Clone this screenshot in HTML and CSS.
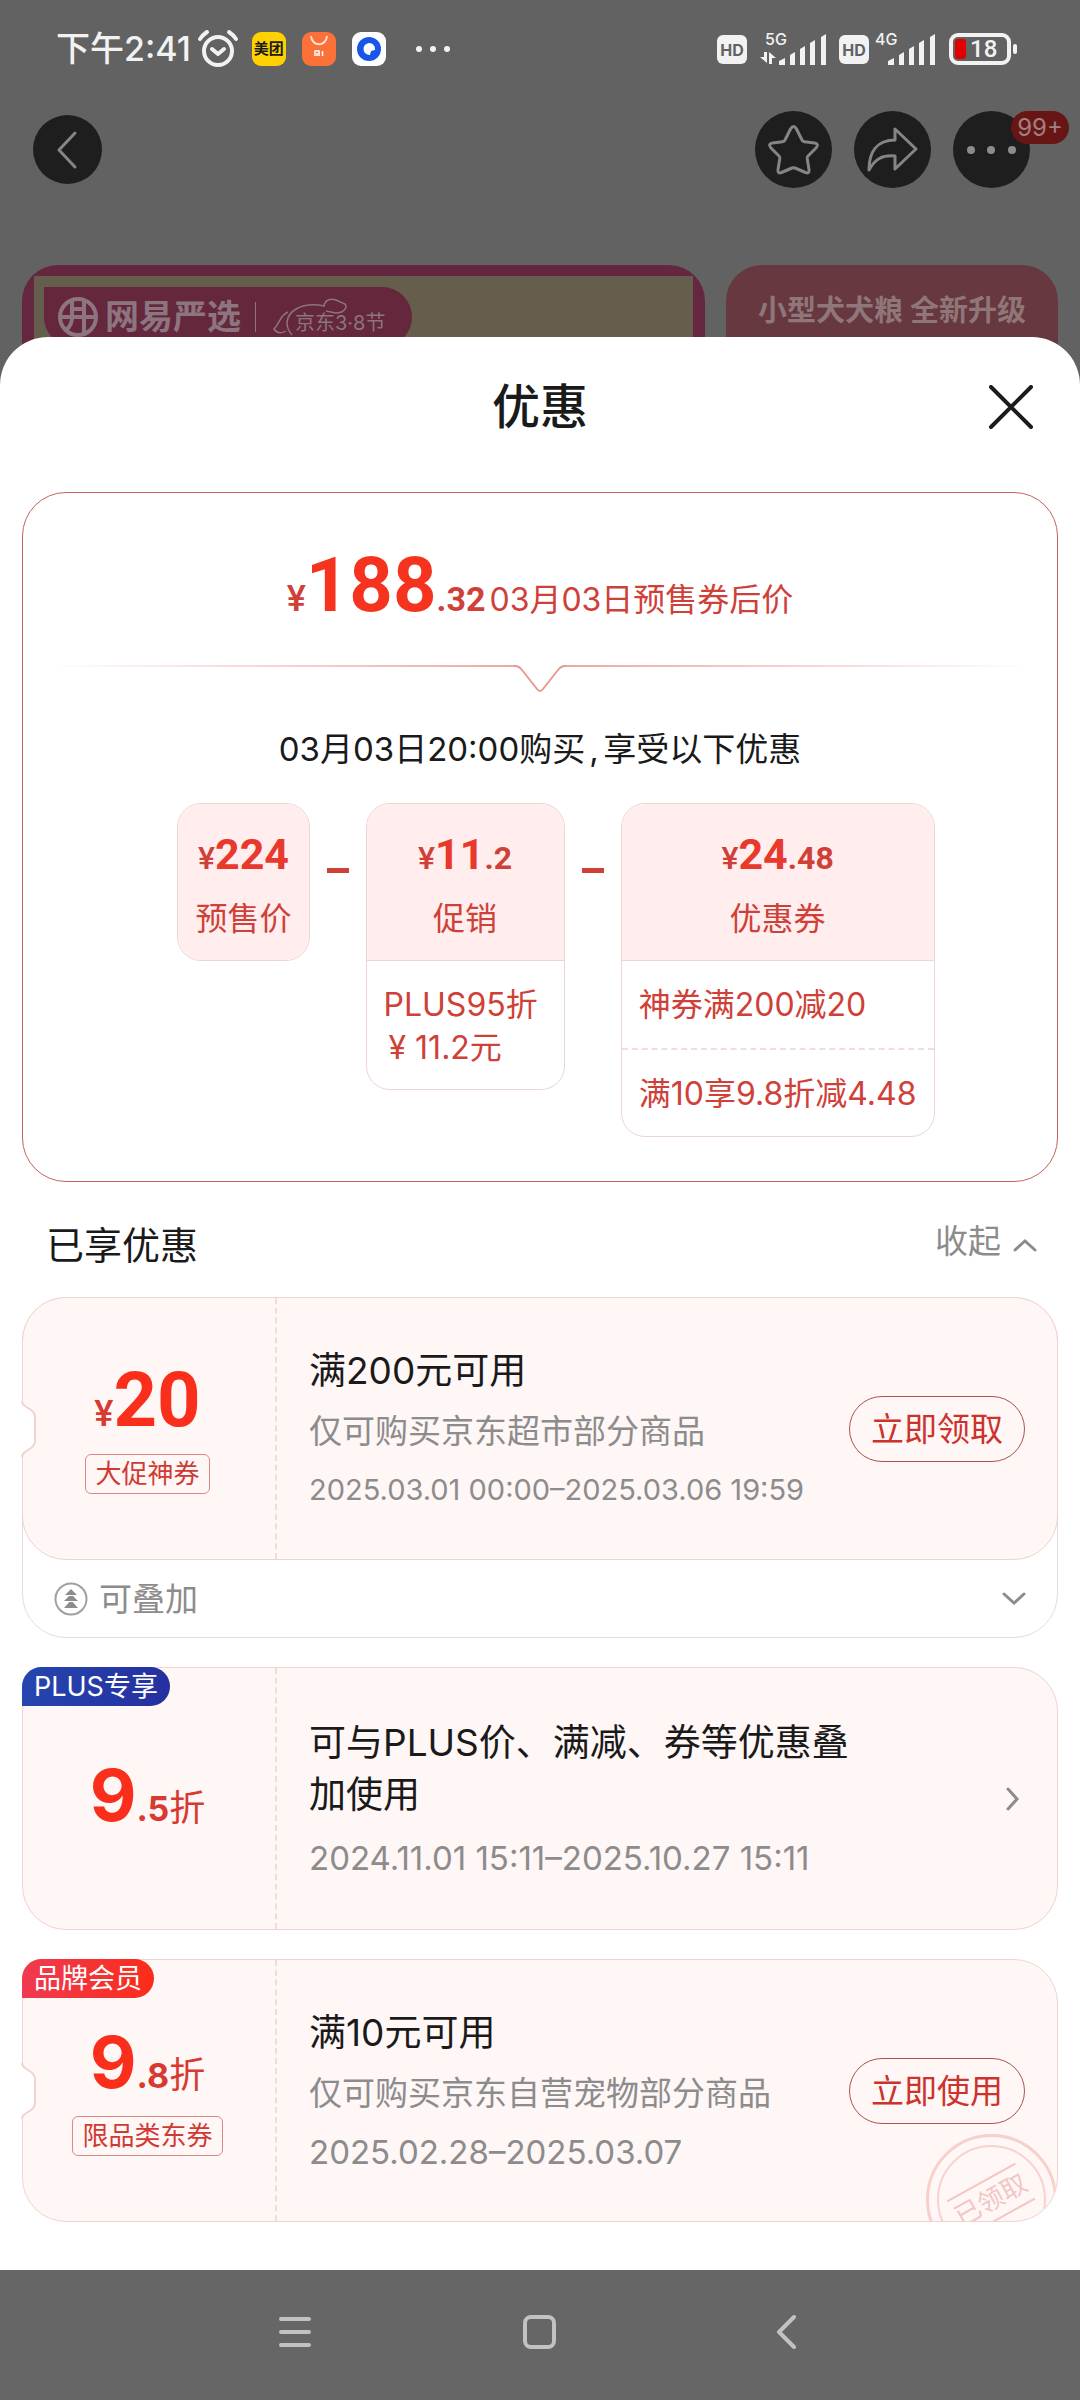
FILE: index.html
```html
<!DOCTYPE html>
<html lang="zh-CN">
<head>
<meta charset="utf-8">
<meta name="viewport" content="width=device-width, initial-scale=1">
<title>优惠</title>
<link rel="stylesheet" href="styles.css">
</head>
<body>
<div class="status">
  <div class="status-side">
    <span class="clock">下午2:41</span>
    <svg class="alarm" width="42" height="40" viewBox="0 0 42 40" fill="none" stroke="#f2f2f2" stroke-linecap="round" stroke-linejoin="round"><circle cx="21" cy="22" r="14" stroke-width="4"/><path d="M15 20l6 5 6-5" stroke-width="4"/><path d="M3 10c2-3 4-5 7-7M39 10c-2-3-4-5-7-7" stroke-width="4"/></svg>
    <span class="app app-mt">美团</span>
    <svg class="app" width="34" height="34" viewBox="0 0 34 34"><rect width="34" height="34" rx="9" fill="#fb7138"/><path d="M9 4c1 11 15 11 16 0" fill="none" stroke="#ffe2d4" stroke-width="2"/><path d="M13 24v-5h4v5M15 21v3M20.500 19v5" fill="none" stroke="#fff" stroke-width="1.500"/></svg>
    <svg class="app" width="34" height="34" viewBox="0 0 34 34"><rect width="34" height="34" rx="9" fill="#fff"/><circle cx="17" cy="17" r="12" fill="#1a55ea"/><path d="M17 11a6 6 0 1 0 1 12l1-4 4-1a6 6 0 0 0-6-7z" fill="#fff"/></svg>
    <svg class="more" width="36" height="8" viewBox="0 0 36 8" fill="#f2f2f2"><circle cx="4" cy="4" r="3"/><circle cx="18" cy="4" r="3"/><circle cx="32" cy="4" r="3"/></svg>
  </div>
  <div class="status-side">
    <span class="hd">HD</span>
    <div class="signal">
      <span class="net">5G</span>
      <svg width="68" height="32" viewBox="0 0 68 32" fill="#f2f2f2"><path d="M5 19h3v11L1 24h4zM10 19l7 6h-4v6h-3z"/><path d="M20 32v-4l6-3v7zM31 32V22l5-3v13zM41 32V16l5-3v19zM51 32V10l5-3v25zM62 32V4l5-3v31z"/></svg>
    </div>
    <span class="hd">HD</span>
    <div class="signal">
      <span class="net net-near">4G</span>
      <svg width="61" height="32" viewBox="7 0 61 32" fill="#f2f2f2"><path d="M20 32v-4l6-3v7zM31 32V22l5-3v13zM41 32V16l5-3v19zM51 32V10l5-3v25zM62 32V4l5-3v31z"/></svg>
    </div>
    <div class="battery"><i class="charge"></i><span>18</span></div>
  </div>
</div>

<nav class="topbar">
  <button class="round round-back" aria-label="返回"><svg width="69" height="69" viewBox="0 0 69 69"><path d="M42 18L26 35l16 17" /></svg></button>
  <div class="actions">
    <button class="round" aria-label="收藏"><svg width="77" height="77" viewBox="0 0 77 77"><path d="M35.500 18q3-5 6 0l5.500 11q.8 1.500 2.500 1.700l10 1.300q5 1 1.500 5l-8 8q-1 1-.8 2.500l1.800 11q.5 4.500-3.500 3l-10.500-4.500q-1.500-.6-3 0L26.500 61.500q-4 1.500-3.500-3l1.800-11q.2-1.500-.8-2.500l-8-8q-3.500-4 1.500-5l10-1.300q1.700-.2 2.500-1.700z"/></svg></button>
    <button class="round" aria-label="分享"><svg width="77" height="77" viewBox="0 0 77 77"><path d="M41 18l21 20-21 20V45c-13-1-20 3-26 14 0-18 8-30 26-30z"/></svg></button>
    <button class="round" aria-label="更多"><svg width="77" height="77" viewBox="0 0 77 77"><g fill="#8c8c8c" stroke="none"><circle cx="18" cy="39" r="4"/><circle cx="38" cy="39" r="4"/><circle cx="59" cy="39" r="4"/></g></svg><span class="count">99+</span></button>
  </div>
</nav>

<div class="banners">
  <div class="banner-main">
    <div class="banner-in">
      <div class="brand">
        <svg width="42" height="42" viewBox="0 0 42 42" fill="none" stroke="#8c7480" stroke-width="4"><circle cx="21" cy="21" r="18"/><path d="M3 21h36M15 5v16c0 6-2 10-6 13M27 3v36M15 13h12"/></svg>
        <span class="brand-name">网易严选</span>
        <i class="brand-bar"></i>
        <svg class="horse" width="76" height="40" viewBox="0 0 76 40" fill="none" stroke="#8c7480" stroke-width="1.500"><path d="M20 38c-8-9-6-20 4-26 9-5 18-5 28-3 1-6 6-8 12-6l9 4c3 4-2 9-9 9l-10-2M16 15C8 18 8 26 2 32c3 5 9 4 12 2"/></svg>
        <span class="brand-day">京东3·8节</span>
      </div>
    </div>
  </div>
  <div class="banner-side">小型犬犬粮 全新升级</div>
</div>

<main class="sheet">
  <header class="sheet-head">
    <h1>优惠</h1>
    <button class="close" aria-label="关闭"><svg width="44" height="44" viewBox="0 0 44 44"><path d="M2 2l40 40M42 2L2 42" stroke="#1c1c1c" stroke-width="4" stroke-linecap="round"/></svg></button>
  </header>

  <section class="calc">
    <p class="final"><span class="yen">¥</span><strong>188</strong><b>.32</b><span class="final-note">03月03日预售券后价</span></p>
    <div class="divider"><i></i><svg width="54" height="28" viewBox="0 0 54 28" fill="none" stroke="#e79a92" stroke-width="2"><path d="M0 1h2q4 0 7 4l15 19q3 4 6 0L45 5q3-4 7-4h2"/></svg><i class="fade-right"></i></div>
    <p class="when">03月03日20:00购买<span class="comma">,</span>享受以下优惠</p>
    <div class="formula">
      <div class="term">
        <div class="term-head"><p class="sum">¥<b>224</b></p><p>预售价</p></div>
      </div>
      <i class="minus"></i>
      <div class="term">
        <div class="term-head"><p class="sum">¥<b>11</b><small>.2</small></p><p>促销</p></div>
        <p class="term-row term-tall">PLUS95折<br><span class="indent">¥ 11.2元</span></p>
      </div>
      <i class="minus"></i>
      <div class="term">
        <div class="term-head"><p class="sum">¥<b>24</b><small>.48</small></p><p>优惠券</p></div>
        <p class="term-row">神券满200减20</p>
        <p class="term-row">满10享9.8折减4.48</p>
      </div>
    </div>
  </section>

  <div class="list-head">
    <h2>已享优惠</h2>
    <button class="fold">收起<svg width="24" height="14" viewBox="0 0 24 14"><path d="M2 12l10-9 10 9"/></svg></button>
  </div>

  <section class="coupons">
    <article class="stack">
      <div class="coupon">
        <svg class="notch" width="15" height="60" viewBox="0 0 15 60"><path d="M0 0l1 2q0 3 3 5l6 4q4 3 4 7v24q0 4-4 7l-6 4q-3 2-3 5l-1 2z" fill="#fff"/><path d="M1 2q0 3 3 5l6 4q4 3 4 7v24q0 4-4 7l-6 4q-3 2-3 5" fill="none" stroke="#f1d3d0" stroke-width="2"/></svg>
        <div class="value">
          <p class="amount"><span class="amount-yen">¥</span><strong>20</strong></p>
          <span class="tag">大促神券</span>
        </div>
        <div class="info">
          <h3>满200元可用</h3>
          <p>仅可购买京东超市部分商品</p>
          <time>2025.03.01 00:00–2025.03.06 19:59</time>
        </div>
        <button class="pill">立即领取</button>
      </div>
      <button class="stack-row">
        <svg width="34" height="34" viewBox="0 0 34 34"><circle cx="17" cy="17" r="15.500" fill="none" stroke="#a0a0a0" stroke-width="2"/><path d="M17 7l6 6H11zM17 12l7 7H10zM17 18l7 8H10z" fill="#8c8c8c"/><path d="M10 13.500h14M10 19.500h14" stroke="#fff"/></svg>
        <span>可叠加</span>
        <svg class="stack-caret" width="24" height="14" viewBox="0 0 24 14"><path d="M2 2l10 9 10-9"/></svg>
      </button>
    </article>

    <article class="coupon">
      <span class="corner corner-plus">PLUS专享</span>
      <div class="value value-solo">
        <p class="amount rate"><strong>9</strong><b>.5</b><span>折</span></p>
      </div>
      <div class="info info-wide">
        <h3>可与PLUS价、满减、券等优惠叠加使用</h3>
        <time>2024.11.01 15:11–2025.10.27 15:11</time>
      </div>
      <a class="go" href="#" aria-label="查看"><svg width="14" height="24" viewBox="0 0 14 24"><path d="M2 2l9 10-9 10"/></svg></a>
    </article>

    <article class="coupon">
      <svg class="notch" width="15" height="60" viewBox="0 0 15 60"><path d="M0 0l1 2q0 3 3 5l6 4q4 3 4 7v24q0 4-4 7l-6 4q-3 2-3 5l-1 2z" fill="#fff"/><path d="M1 2q0 3 3 5l6 4q4 3 4 7v24q0 4-4 7l-6 4q-3 2-3 5" fill="none" stroke="#f1d3d0" stroke-width="2"/></svg>
      <span class="corner corner-brand">品牌会员</span>
      <div class="value">
        <p class="amount rate"><strong>9</strong><b>.8</b><span>折</span></p>
        <span class="tag">限品类东券</span>
      </div>
      <div class="info info-wide">
        <h3>满10元可用</h3>
        <p>仅可购买京东自营宠物部分商品</p>
        <time>2025.02.28–2025.03.07</time>
      </div>
      <button class="pill">立即使用</button>
      <div class="stamp-box"><div class="stamp"><span>已领取</span></div></div>
    </article>
  </section>
</main>

<footer class="keys">
  <button aria-label="菜单"><svg width="32" height="32" viewBox="0 0 32 32"><path d="M2 3h28M2 16h28M2 29h28"/></svg></button>
  <button aria-label="主页"><svg width="34" height="34" viewBox="0 0 34 34"><rect x="2" y="2" width="29" height="30" rx="6"/></svg></button>
  <button aria-label="返回"><svg width="32" height="34" viewBox="0 0 32 34"><path d="M25 2L10 17l15 15"/></svg></button>
</footer>
</body>
</html>
```
FILE: styles.css
```css
* { box-sizing: border-box; margin: 0; padding: 0; }

body {
  display: flex;
  flex-direction: column;
  min-height: 100vh;
  background: #626262;
  color: #1a1a1a;
  font-family: Inter, "Noto Sans CJK SC", sans-serif;
  font-size: 33px;
  line-height: 44px;
}

button { border: 0; background: none; color: inherit; font: inherit; }
svg { display: block; flex: none; }
h1, h2, h3 { font-weight: 400; }

/* status bar */
.status {
  display: flex;
  justify-content: space-between;
  align-items: center;
  height: 98px;
  padding: 0 69px 0 56px;
  color: #f2f2f2;
}
.status-side { display: flex; align-items: center; }
.clock { font-size: 34px; font-weight: 500; }
.alarm { margin: 0 13px 0 6px; }
.app { width: 34px; height: 34px; margin-right: 16px; }
.app-mt {
  border-radius: 9px;
  background: #ffd100;
  color: #1a1a1a;
  font-size: 15px;
  font-weight: 700;
  line-height: 34px;
  text-align: center;
}
.more { margin-left: 13px; }
.hd {
  width: 30px;
  height: 29px;
  border-radius: 6px;
  background: #f2f2f2;
  color: #626262;
  font-size: 16px;
  font-weight: 700;
  line-height: 30px;
  text-align: center;
}
.signal { position: relative; margin: 0 12px; }
.signal + .hd + .signal { margin: 0 13px 0 6px; }
.net {
  position: absolute;
  left: 6px;
  top: -2px;
  font-size: 16px;
  font-weight: 500;
  line-height: 16px;
}
.net-near { left: 0; }
.battery {
  position: relative;
  display: flex;
  align-items: center;
  gap: 4px;
  width: 62px;
  height: 32px;
  border: 4px solid #f2f2f2;
  border-radius: 9px;
  font-size: 24px;
  font-weight: 500;
  line-height: 24px;
  font-family: Roboto, sans-serif;
}
.battery::after {
  content: "";
  position: absolute;
  left: 60px;
  top: 7px;
  width: 4px;
  height: 10px;
  border-radius: 2px;
  background: #f2f2f2;
}
.charge { width: 11px; height: 20px; margin-left: 2px; border-radius: 3px; background: #e00000; }

/* page header behind the sheet */
.topbar {
  display: flex;
  justify-content: space-between;
  align-items: center;
  height: 102px;
  padding: 0 50px 0 33px;
}
.actions { display: flex; gap: 22px; }
.round {
  position: relative;
  width: 77px;
  height: 77px;
  border-radius: 50%;
  background: #1e1e1e;
}
.round-back { width: 69px; height: 69px; }
.round path { fill: none; stroke: #858585; stroke-width: 3; stroke-linecap: round; stroke-linejoin: round; }
.count {
  position: absolute;
  right: -39px;
  top: 0;
  width: 58px;
  height: 33px;
  border-radius: 17px;
  background: #681515;
  color: #a08080;
  font-size: 24px;
  line-height: 33px;
}

.banners {
  display: grid;
  grid-template-columns: 683fr 332fr;
  gap: 21px;
  height: 185px;
  margin-bottom: -48px;
  padding: 65px 22px 0;
}
.banner-main {
  padding: 11px 12px 0;
  border-radius: 36px 36px 0 0;
  background: #64273f;
}
.banner-in { height: 100%; padding: 11px 10px 0; background: #665e4c; }
.brand {
  display: flex;
  align-items: center;
  width: 368px;
  height: 60px;
  padding-left: 13px;
  border-radius: 0 30px 30px 30px;
  background: #64273b;
  color: #8c7480;
}
.brand-name { margin-left: 6px; font-size: 34px; font-weight: 700; }
.brand-bar { width: 1px; height: 30px; margin: 0 16px 0 14px; background: #8c7480; }
.horse { margin: 0 -53px 0 0; }
.brand-day { padding-top: 12px; font-size: 20px; }
.banner-side {
  padding-top: 24px;
  border-radius: 36px 36px 0 0;
  background: #67383f;
  color: #8f7679;
  font-size: 29px;
  font-weight: 700;
  text-align: center;
}

/* bottom sheet */
.sheet {
  flex: 1;
  position: relative;
  padding: 0 22px 46px;
  border-radius: 48px 48px 0 0;
  background: #fff;
}
.sheet-head {
  display: grid;
  grid-template-columns: 1fr auto 1fr;
  align-items: center;
  height: 140px;
  margin-bottom: 15px;
}
.sheet-head h1 { grid-column: 2; font-size: 48px; font-weight: 500; line-height: 60px; }
.close { justify-self: end; margin-right: 25px; }

.calc {
  padding-top: 54px;
  padding-bottom: 44px;
  border: 1px solid #c4625c;
  border-radius: 44px;
  color: #cf4038;
}
.final { display: flex; justify-content: center; align-items: baseline; height: 80px; line-height: 76px; }
.final strong { font: 700 76px/76px Roboto, sans-serif; color: #f5331f; }
.final b { font: 700 34px/44px Roboto, sans-serif; }
.yen, .amount-yen { font: 500 36px/44px Roboto, sans-serif; }
.final-note { margin-left: 4px; font-size: 32px; }
.divider { display: flex; margin: 38px 24px 34px; }
.divider i { flex: 1; height: 2px; background: linear-gradient(90deg, #fff, #eba9a2); }
.divider .fade-right { background: linear-gradient(270deg, #fff, #eba9a2); }
.when { color: #1a1a1a; text-align: center; }
.comma { display: inline-block; width: 18px; padding-left: 4px; text-align: left; }

.formula {
  display: flex;
  justify-content: center;
  align-items: flex-start;
  margin-top: 32px;
  padding-left: 32px;
  font-size: 32px;
  line-height: 43px;
}
.term {
  overflow: hidden;
  border: 1px solid #ecd6d3;
  border-radius: 24px;
}
.term-head { height: 156px; padding: 28px 17px 0; background: #ffeeed; text-align: center; }
.sum { margin-bottom: 17px; font-weight: 500; font-family: Roboto, sans-serif; line-height: 44px; }
.sum b { font-size: 43px; color: #e8392c; }
.sum small { font-size: 32px; font-weight: 700; }
.term-row { padding: 22px 17px; border-top: 1px solid #ecd6d3; }
.term-row + .term-row { padding-bottom: 21px; border-top: 2px dashed #f1dedc; }
.term-tall { padding-right: 26px; padding-bottom: 20px; }
.indent { padding-left: 5px; }
.minus { flex: none; width: 22px; height: 5px; margin: 65px 17px 0; background: #cf4038; }

.list-head { display: flex; justify-content: space-between; align-items: center; height: 115px; padding: 0 21px 0 24px; }
.list-head h2 { padding-top: 10px; font-size: 38px; }
.fold { display: flex; align-items: center; gap: 12px; padding-top: 2px; color: #8c8c8c; }
.fold svg { margin-top: 8px; }
.fold path, .stack-caret path, .go path { fill: none; stroke: #8c8c8c; stroke-width: 3; stroke-linecap: round; }

/* coupons */
.coupons { display: grid; gap: 29px; }
.stack { border: 1px solid #e2dede; border-radius: 44px; }
.stack .coupon { margin: -1px; }
.coupon {
  position: relative;
  display: flex;
  align-items: center;
  min-height: 263px;
  padding-right: 32px;
  border: 1px solid #f1d3d0;
  border-radius: 44px;
  background: #fff6f6;
}
.notch { position: absolute; left: -2px; top: 101px; }
.value {
  display: flex;
  flex-direction: column;
  justify-content: center;
  align-items: center;
  align-self: stretch;
  gap: 14px;
  width: 254px;
  padding: 0 3px 4px 0;
  border-right: 2px dashed #f1dcda;
}
.value-solo { padding-bottom: 8px; }
.amount { display: flex; align-items: baseline; height: 80px; color: #d63a30; line-height: 80px; }
.amount strong { font: 700 76px/80px Roboto, sans-serif; color: #f92e1b; }
.rate strong { font-family: Inter, sans-serif; font-size: 72px; }
.rate b { font-size: 34px; }
.rate span { font-size: 36px; }
.tag {
  padding: 0 9px;
  border: 1px solid #d98a86;
  border-radius: 6px;
  color: #cf3a32;
  font-size: 26px;
  line-height: 38px;
}
.info { flex: 1; padding-left: 32px; }
.info h3 { font-size: 37px; line-height: 52px; }
.info p { margin-top: 12px; color: #8c8c8c; }
.info time { display: block; margin-top: 15px; color: #8c8c8c; font-size: 29px; }
.info-wide time { font-size: 33px; }
.pill {
  width: 176px;
  height: 66px;
  border: 1px solid #b0504c;
  border-radius: 33px;
  color: #cc332b;
  white-space: nowrap;
}
.go { padding: 0 5px 0 140px; }
.stack-row {
  display: flex;
  align-items: center;
  gap: 11px;
  width: 100%;
  height: 78px;
  padding: 2px 31px 0;
  color: #8c8c8c;
}
.stack-caret { margin-left: auto; }
.corner {
  position: absolute;
  left: -1px;
  top: -1px;
  height: 39px;
  padding: 0 12px;
  border-radius: 20px 20px 20px 0;
  color: #fff;
  font-size: 27px;
  line-height: 39px;
}
.corner-plus { background: linear-gradient(90deg, #2546ae, #2530a0); }
.corner-brand { background: linear-gradient(90deg, #f03a50, #fb2c1a); }
.stamp-box { position: absolute; inset: 0; overflow: hidden; border-radius: 43px; pointer-events: none; }
.stamp {
  position: absolute;
  right: 0;
  bottom: -44px;
  display: grid;
  place-items: center;
  width: 131px;
  height: 131px;
  border: 3px solid #f9cfcc;
  border-radius: 50%;
  color: #f3c6c3;
  font-size: 26px;
  line-height: 38px;
}
.stamp::before { content: ""; position: absolute; inset: 8px; border: 2px solid #f6d3d1; border-radius: 50%; }
.stamp span { border: solid #f3c6c3; border-width: 2px 0; transform: rotate(-29deg); }

/* system keys */
.keys {
  display: grid;
  grid-template-columns: repeat(3, 245px);
  justify-content: center;
  align-items: center;
  height: 130px;
  padding-bottom: 6px;
  background: #666;
}
.keys button { justify-self: center; }
.keys svg { fill: none; stroke: #c2c2c2; stroke-width: 4; stroke-linecap: round; stroke-linejoin: round; }
```
